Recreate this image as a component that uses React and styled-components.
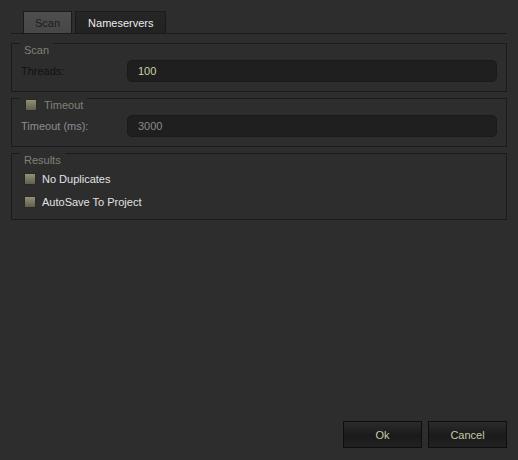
import React from "react";
import styled, { createGlobalStyle } from "styled-components";

const Global = createGlobalStyle`
  html, body {
    margin: 0;
    padding: 0;
    background: #2d2d2d;
  }
  body {
    font-family: "Liberation Sans", Arial, sans-serif;
    font-size: 11px;
  }
`;

const Window = styled.div`
  box-sizing: border-box;
  width: 518px;
  height: 460px;
  padding: 11px 11px 12px 11px;
  display: flex;
  flex-direction: column;
  background: #2d2d2d;
`;

const TabBar = styled.div`
  display: flex;
  gap: 3px;
  padding-left: 12px;
  border-bottom: 1px solid #1b1b1b;
`;

const Tab = styled.div`
  box-sizing: border-box;
  height: 22px;
  padding: 1px ${({ $active }) => ($active ? "11px" : "12px")} 0;
  display: flex;
  align-items: center;
  border: 1px solid #1b1b1b;
  border-bottom: none;
  background: ${({ $active }) =>
    $active ? "linear-gradient(#4e4e4e, #474747)" : "linear-gradient(#262626, #222222)"};
  color: ${({ $active }) => ($active ? "#1c1c1c" : "#ececec")};
`;

const Groups = styled.div`
  margin-top: 9px;
  display: flex;
  flex-direction: column;
  gap: 6px;
`;

const Group = styled.div`
  border: 1px solid #1b1b1b;
  padding: 0 9px ${({ $bottom }) => $bottom}px 0;
`;

const Title = styled.div`
  display: flex;
  align-items: center;
  gap: 7px;
  width: fit-content;
  height: 14px;
  line-height: 15px;
  margin: -1px 0 0 8px;
  padding: 0 4px 0 ${({ $pad }) => $pad}px;
  background: #2d2d2d;
  color: #818175;
`;

const Row = styled.div`
  display: flex;
  align-items: center;
  margin-top: 3px;
  padding-left: 9px;
`;

const Label = styled.span`
  width: 106px;
  color: ${({ $disabled }) => ($disabled ? "#8a8d94" : "#111111")};
`;

const Field = styled.div`
  box-sizing: border-box;
  flex: 1;
  height: 22px;
  display: flex;
  align-items: center;
  padding-left: 10px;
  background: #1f1f1f;
  border: 1px solid #1a1a1a;
  border-radius: 5px;
  color: ${({ $disabled }) => ($disabled ? "#8a8a8a" : "#cfcfa4")};
`;

const Box = styled.span`
  box-sizing: border-box;
  width: 12px;
  height: 12px;
  flex: none;
  border: 1px solid #2a2a22;
  background: linear-gradient(#929279, #5f5f4c);
`;

const Check = styled.div`
  display: flex;
  align-items: center;
  gap: 6px;
  height: 23px;
  padding-left: 12px;
  color: #e2e2e2;
`;

const Spacer = styled.div`
  flex: 1;
`;

const Buttons = styled.div`
  display: flex;
  justify-content: flex-end;
  gap: 6px;
`;

const Button = styled.div`
  box-sizing: border-box;
  width: 79px;
  height: 27px;
  display: flex;
  align-items: center;
  justify-content: center;
  padding-top: 1px;
  border: 1px solid #0e0e0e;
  background: linear-gradient(#2b2b2b 0%, #1d1d1d 45%, #1a1a1a 55%, #222222 100%);
  color: #c9c9a2;
`;

export default function App() {
  return (
    <Window>
      <Global />
      <TabBar>
        <Tab $active>Scan</Tab>
        <Tab>Nameservers</Tab>
      </TabBar>
      <Groups>
        <Group $bottom={9}>
          <Title $pad={4}>Scan</Title>
          <Row>
            <Label>Threads:</Label>
            <Field>100</Field>
          </Row>
        </Group>
        <Group $bottom={9}>
          <Title $pad={5}>
            <Box />
            Timeout
          </Title>
          <Row>
            <Label $disabled>Timeout (ms):</Label>
            <Field $disabled>3000</Field>
          </Row>
        </Group>
        <Group $bottom={6}>
          <Title $pad={4}>Results</Title>
          <div>
            <Check>
              <Box />
              No Duplicates
            </Check>
            <Check>
              <Box />
              AutoSave To Project
            </Check>
          </div>
        </Group>
      </Groups>
      <Spacer />
      <Buttons>
        <Button>Ok</Button>
        <Button>Cancel</Button>
      </Buttons>
    </Window>
  );
}
